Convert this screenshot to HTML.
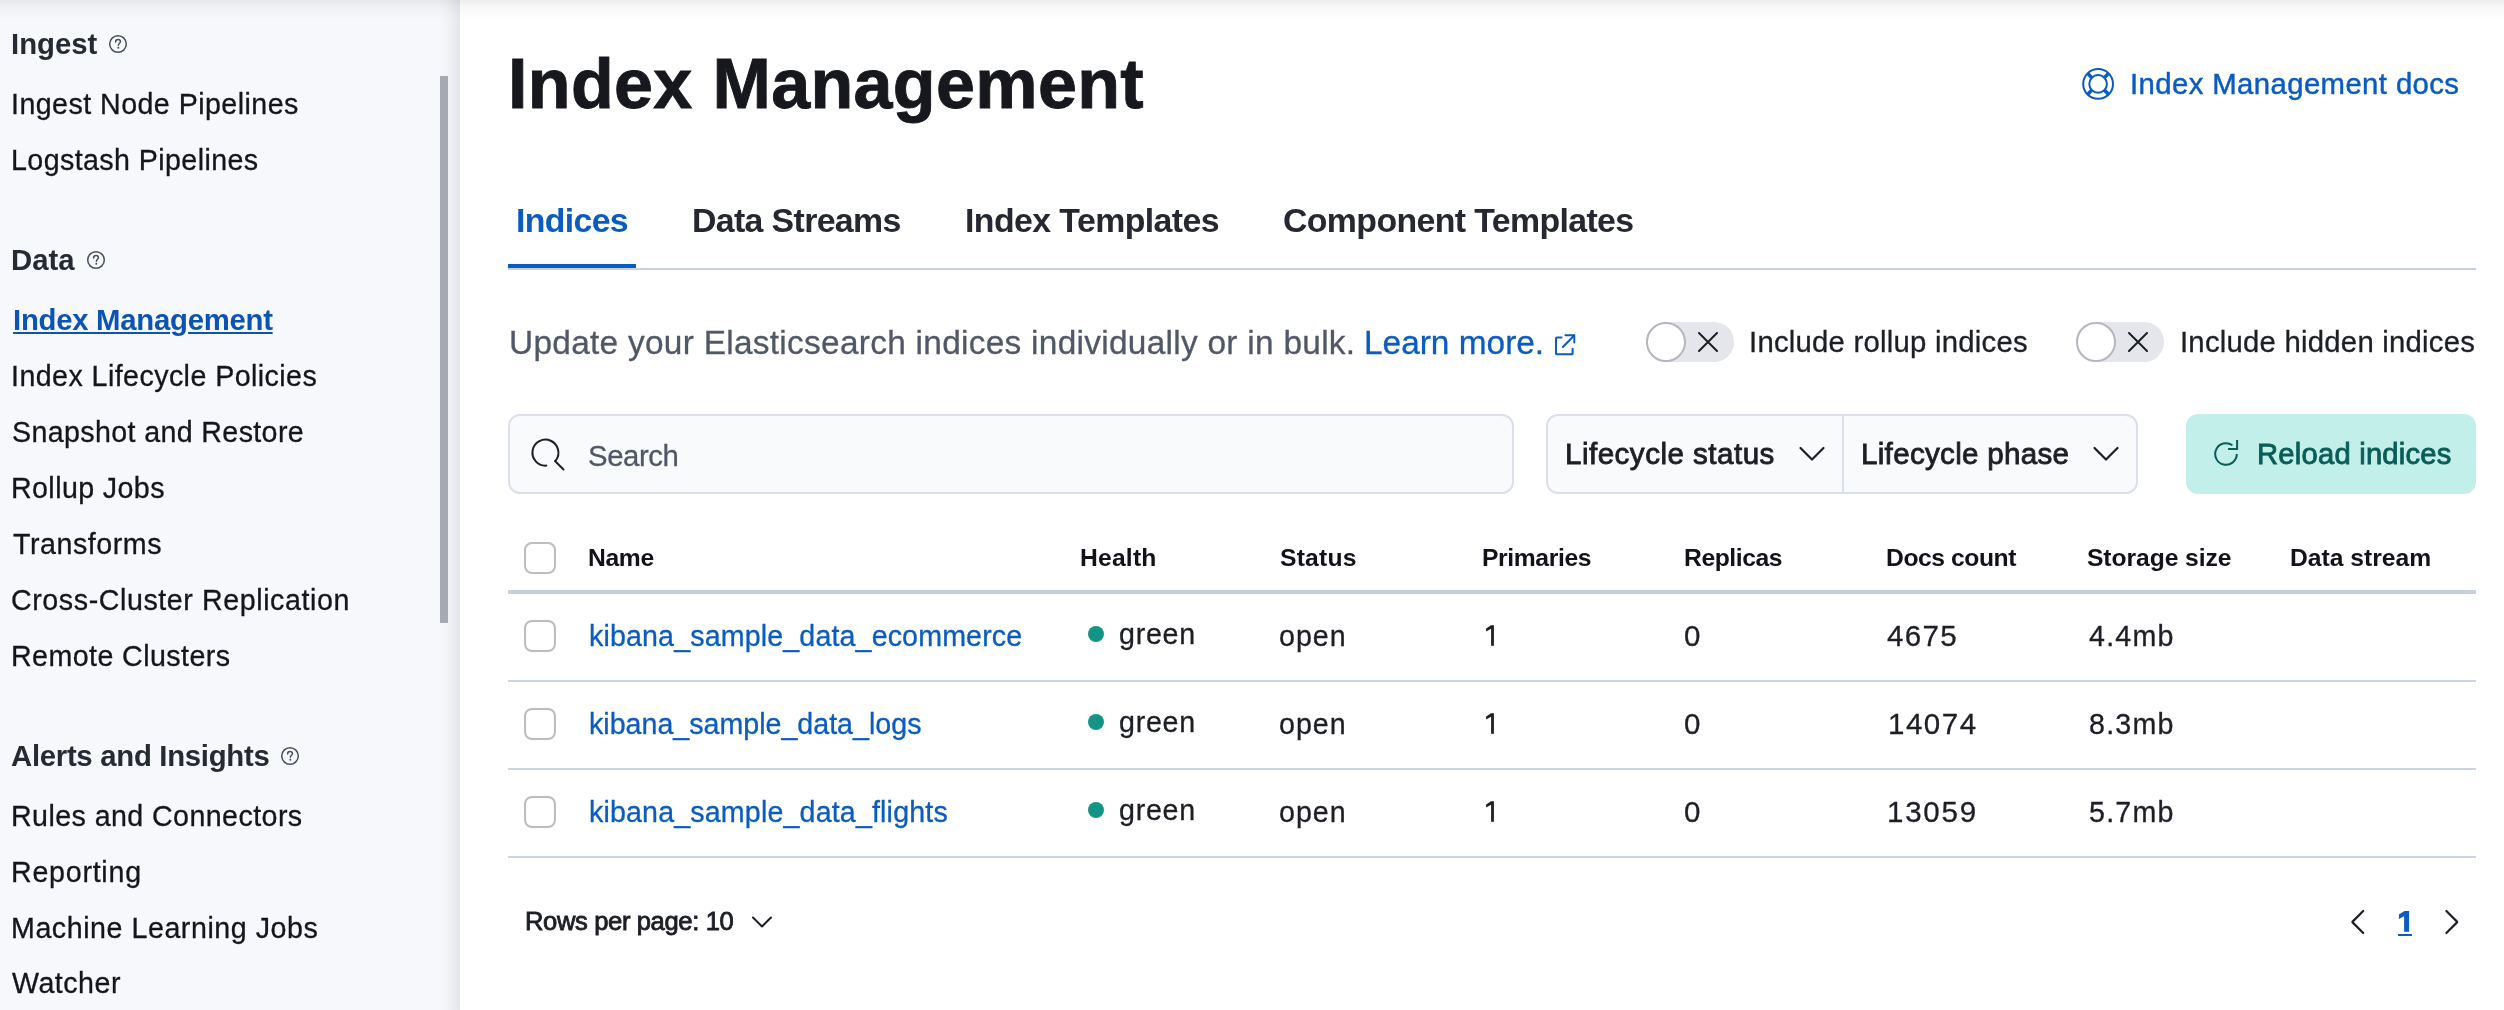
<!DOCTYPE html>
<html><head><meta charset="utf-8"><title>Index Management</title>
<style>
html,body{margin:0;padding:0;width:2504px;height:1010px;overflow:hidden;background:#fff;}
body{position:relative;font-family:"Liberation Sans",sans-serif;}
.t{position:absolute;white-space:nowrap;line-height:1;display:block;will-change:transform;}
.bm{display:inline-block;width:0;height:0;vertical-align:baseline;}
.abs{position:absolute;}
</style></head><body>
<div class="abs" style="left:0;top:0;width:460px;height:1010px;background:#F7F8FC;"></div>
<div class="abs" style="left:438px;top:0;width:22px;height:1010px;background:linear-gradient(to right,rgba(25,30,45,0) 0%,rgba(25,30,45,0.025) 45%,rgba(25,30,45,0.085) 100%);"></div>
<div class="abs" style="left:440px;top:76px;width:8px;height:547px;background:#A6A9B1;"></div>
<div class="abs" style="left:0;top:0;width:2504px;height:19px;background:linear-gradient(to bottom,rgba(40,42,50,0.085) 0%,rgba(40,42,50,0.035) 35%,rgba(40,42,50,0) 100%);"></div>
<!-- help icons -->
<svg class="abs" style="left:108px;top:34px" width="20" height="20" viewBox="0 0 20 20"><circle cx="10" cy="10" r="8.3" fill="none" stroke="#4A5060" stroke-width="1.5"/><path d="M7.6 7.9 C7.6 6.4 8.7 5.6 10 5.6 C11.3 5.6 12.4 6.4 12.4 7.7 C12.4 9.2 10.4 9.4 10.4 11.2" fill="none" stroke="#4A5060" stroke-width="1.5" stroke-linecap="round"/><circle cx="10.3" cy="13.8" r="1" fill="#4A5060"/></svg>
<svg class="abs" style="left:86px;top:250px" width="20" height="20" viewBox="0 0 20 20"><circle cx="10" cy="10" r="8.3" fill="none" stroke="#4A5060" stroke-width="1.5"/><path d="M7.6 7.9 C7.6 6.4 8.7 5.6 10 5.6 C11.3 5.6 12.4 6.4 12.4 7.7 C12.4 9.2 10.4 9.4 10.4 11.2" fill="none" stroke="#4A5060" stroke-width="1.5" stroke-linecap="round"/><circle cx="10.3" cy="13.8" r="1" fill="#4A5060"/></svg>
<svg class="abs" style="left:280px;top:746px" width="20" height="20" viewBox="0 0 20 20"><circle cx="10" cy="10" r="8.3" fill="none" stroke="#4A5060" stroke-width="1.5"/><path d="M7.6 7.9 C7.6 6.4 8.7 5.6 10 5.6 C11.3 5.6 12.4 6.4 12.4 7.7 C12.4 9.2 10.4 9.4 10.4 11.2" fill="none" stroke="#4A5060" stroke-width="1.5" stroke-linecap="round"/><circle cx="10.3" cy="13.8" r="1" fill="#4A5060"/></svg>
<!-- docs lifebuoy -->
<svg class="abs" style="left:2080px;top:66px" width="36" height="36" viewBox="0 0 36 36"><g fill="none" stroke="#0B5CC0"><circle cx="18.1" cy="17.9" r="14.9" stroke-width="2"/><circle cx="18.1" cy="17.9" r="8.8" stroke-width="2"/><path d="M11.9 11.7 L7.5 7.3 M24.3 11.7 L28.7 7.3 M11.9 24.1 L7.5 28.5 M24.3 24.1 L28.7 28.5" stroke-width="3.6"/></g></svg>
<!-- tabs -->
<div class="abs" style="left:508px;top:268px;width:1968px;height:2px;background:#CAD1DE;"></div>
<div class="abs" style="left:508px;top:264px;width:128px;height:4px;background:#0B5CC0;"></div>
<!-- external link icon -->
<svg class="abs" style="left:1552px;top:332px" width="26" height="26" viewBox="0 0 26 26"><g fill="none" stroke="#0B5CC0" stroke-width="2" stroke-linecap="round" stroke-linejoin="round"><path d="M9.6 5.4 H4.9 Q4 5.4 4 6.3 V21.4 Q4 22.3 4.9 22.3 H19.7 Q20.6 22.3 20.6 21.4 V16.8"/><path d="M13.4 3.3 H22.3 V10.4"/><path d="M22.1 3.5 L10.9 15"/></g></svg>
<!-- toggles -->
<div class="abs" style="left:1646px;top:322px;width:88px;height:40px;border-radius:20px;background:#E4E6EB;"></div>
<div class="abs" style="left:1646px;top:322px;width:36px;height:36px;border-radius:50%;background:#fff;border:2px solid #B5B7BC;"></div>
<svg class="abs" style="left:1698px;top:332px" width="20" height="20" viewBox="0 0 20 20"><path d="M1 1 L19 19 M19 1 L1 19" stroke="#1D1F25" stroke-width="2" stroke-linecap="round"/></svg>
<div class="abs" style="left:2076px;top:322px;width:88px;height:40px;border-radius:20px;background:#E4E6EB;"></div>
<div class="abs" style="left:2076px;top:322px;width:36px;height:36px;border-radius:50%;background:#fff;border:2px solid #B5B7BC;"></div>
<svg class="abs" style="left:2128px;top:332px" width="20" height="20" viewBox="0 0 20 20"><path d="M1 1 L19 19 M19 1 L1 19" stroke="#1D1F25" stroke-width="2" stroke-linecap="round"/></svg>
<!-- search -->
<div class="abs" style="left:508px;top:414px;width:1002px;height:76px;border:2px solid #DCDFEC;border-radius:12px;background:#F9FAFC;"></div>
<svg class="abs" style="left:528px;top:434px" width="40" height="40" viewBox="0 0 40 40"><g fill="none" stroke="#1D1F25" stroke-width="2" stroke-linecap="round"><path d="M18.3 31.6 A13 13 0 1 1 27.7 26.6"/><path d="M27 27 L35.5 35.5"/></g></svg>
<!-- filter group -->
<div class="abs" style="left:1546px;top:414px;width:588px;height:76px;border:2px solid #DCDFEC;border-radius:12px;background:#F9FAFC;"></div>
<div class="abs" style="left:1842px;top:414px;width:2px;height:80px;background:#DCDFEC;"></div>
<svg class="abs" style="left:1798px;top:444px" width="28" height="18" viewBox="0 0 28 18"><path d="M2.5 4 L14 15.5 L25.5 4" fill="none" stroke="#1D1F25" stroke-width="2.2" stroke-linecap="round" stroke-linejoin="round"/></svg>
<svg class="abs" style="left:2092px;top:444px" width="28" height="18" viewBox="0 0 28 18"><path d="M2.5 4 L14 15.5 L25.5 4" fill="none" stroke="#1D1F25" stroke-width="2.2" stroke-linecap="round" stroke-linejoin="round"/></svg>
<!-- reload -->
<div class="abs" style="left:2186px;top:414px;width:290px;height:80px;border-radius:12px;background:#C3EFEA;"></div>
<svg class="abs" style="left:2210px;top:438px" width="32" height="32" viewBox="0 0 32 32"><g fill="none" stroke="#0A5C57" stroke-width="2" stroke-linecap="butt"><path d="M26.8 16 A10.8 10.8 0 1 1 22.4 7.3"/><path d="M27.1 2 V11.1 H18.1"/></g></svg>
<!-- table -->
<div class="abs" style="left:508px;top:590px;width:1968px;height:4px;background:#C8D0DE;"></div>
<div class="abs" style="left:508px;top:680px;width:1968px;height:2px;background:#CDD4E1;"></div>
<div class="abs" style="left:508px;top:768px;width:1968px;height:2px;background:#CDD4E1;"></div>
<div class="abs" style="left:508px;top:856px;width:1968px;height:2px;background:#CDD4E1;"></div>
<div class="abs" style="left:524px;top:542px;width:28px;height:28px;border:2px solid #BBBDC2;border-radius:8px;background:#fff;"></div>
<div class="abs" style="left:524px;top:620px;width:28px;height:28px;border:2px solid #BBBDC2;border-radius:8px;background:#fff;"></div>
<div class="abs" style="left:524px;top:708px;width:28px;height:28px;border:2px solid #BBBDC2;border-radius:8px;background:#fff;"></div>
<div class="abs" style="left:524px;top:796px;width:28px;height:28px;border:2px solid #BBBDC2;border-radius:8px;background:#fff;"></div>
<div class="abs" style="left:1088px;top:626px;width:16px;height:16px;border-radius:50%;background:#139487;"></div>
<div class="abs" style="left:1088px;top:714px;width:16px;height:16px;border-radius:50%;background:#139487;"></div>
<div class="abs" style="left:1088px;top:802px;width:16px;height:16px;border-radius:50%;background:#139487;"></div>
<!-- footer -->
<svg class="abs" style="left:750px;top:913px" width="24" height="16" viewBox="0 0 24 16"><path d="M3 4.5 L12 13.5 L21 4.5" fill="none" stroke="#1D1F25" stroke-width="2" stroke-linecap="round" stroke-linejoin="round"/></svg>
<svg class="abs" style="left:2348px;top:908px" width="20" height="28" viewBox="0 0 20 28"><path d="M15.2 3 L4.6 13.6 Q4.2 14 4.6 14.4 L15.2 25" fill="none" stroke="#1D1F25" stroke-width="2.2" stroke-linecap="round" stroke-linejoin="round"/></svg>
<svg class="abs" style="left:2442px;top:908px" width="20" height="28" viewBox="0 0 20 28"><path d="M4.4 3 L15 13.6 Q15.4 14 15 14.4 L4.4 25" fill="none" stroke="#1D1F25" stroke-width="2.2" stroke-linecap="round" stroke-linejoin="round"/></svg>
<svg class="abs" style="left:0;top:0" width="2504" height="1010" viewBox="0 0 2504 1010"><g fill="#1D1F25"><path d="M1486.1 628.4 L1491.1 625.2 L1493.9 625.2 L1493.9 645.8 L1491.1 645.8 L1491.1 628.7 L1486.1 631.4 Z"/><path d="M1486.1 716.4 L1491.1 713.2 L1493.9 713.2 L1493.9 733.8 L1491.1 733.8 L1491.1 716.7 L1486.1 719.4 Z"/><path d="M1486.1 804.4 L1491.1 801.2 L1493.9 801.2 L1493.9 821.8 L1491.1 821.8 L1491.1 804.7 L1486.1 807.4 Z"/></g><g fill="#0B5CC0"><path d="M2398.9 914.4 L2404.5 910.9 L2409.1 910.9 L2409.1 931.8 L2404.1 931.8 L2404.1 916.3 L2398.9 918.9 Z"/><rect x="2398" y="934" width="14" height="2"/></g></svg>

<span id="s1" class="t" style="left:10.98px;top:29.21px;font-size:29.32px;letter-spacing:-0.000px;color:#262A33;font-weight:700;">Ingest<i class="bm"></i></span>
<span id="s2" class="t" style="left:11.44px;top:89.71px;font-size:28.62px;letter-spacing:0.450px;color:#14161B;font-weight:400;-webkit-text-stroke:0.3px currentColor;">Ingest Node Pipelines<i class="bm"></i></span>
<span id="s3" class="t" style="left:11.14px;top:145.60px;font-size:28.62px;letter-spacing:0.410px;color:#14161B;font-weight:400;-webkit-text-stroke:0.3px currentColor;">Logstash Pipelines<i class="bm"></i></span>
<span id="s4" class="t" style="left:10.68px;top:244.90px;font-size:29.32px;letter-spacing:-0.001px;color:#262A33;font-weight:700;">Data<i class="bm"></i></span>
<span id="s5" class="t" style="left:12.68px;top:305.00px;font-size:29.32px;letter-spacing:-0.264px;color:#0C54B4;font-weight:700;text-decoration:underline;text-decoration-thickness:2px;text-underline-offset:2px;">Index Management<i class="bm"></i></span>
<span id="s6" class="t" style="left:11.44px;top:362.00px;font-size:28.62px;letter-spacing:0.434px;color:#14161B;font-weight:400;-webkit-text-stroke:0.3px currentColor;">Index Lifecycle Policies<i class="bm"></i></span>
<span id="s7" class="t" style="left:11.54px;top:418.00px;font-size:28.62px;letter-spacing:0.369px;color:#14161B;font-weight:400;-webkit-text-stroke:0.3px currentColor;">Snapshot and Restore<i class="bm"></i></span>
<span id="s8" class="t" style="left:11.04px;top:474.00px;font-size:28.62px;letter-spacing:0.400px;color:#14161B;font-weight:400;-webkit-text-stroke:0.3px currentColor;">Rollup Jobs<i class="bm"></i></span>
<span id="s9" class="t" style="left:12.54px;top:530.00px;font-size:28.62px;letter-spacing:0.548px;color:#14161B;font-weight:400;-webkit-text-stroke:0.3px currentColor;">Transforms<i class="bm"></i></span>
<span id="s10" class="t" style="left:11.04px;top:586.00px;font-size:28.62px;letter-spacing:0.584px;color:#14161B;font-weight:400;-webkit-text-stroke:0.3px currentColor;">Cross-Cluster Replication<i class="bm"></i></span>
<span id="s11" class="t" style="left:11.04px;top:642.00px;font-size:28.62px;letter-spacing:0.428px;color:#14161B;font-weight:400;-webkit-text-stroke:0.3px currentColor;">Remote Clusters<i class="bm"></i></span>
<span id="s12" class="t" style="left:11.18px;top:740.50px;font-size:29.32px;letter-spacing:-0.284px;color:#262A33;font-weight:700;">Alerts and Insights<i class="bm"></i></span>
<span id="s13" class="t" style="left:11.04px;top:801.71px;font-size:28.62px;letter-spacing:0.424px;color:#14161B;font-weight:400;-webkit-text-stroke:0.3px currentColor;">Rules and Connectors<i class="bm"></i></span>
<span id="s14" class="t" style="left:11.04px;top:858.00px;font-size:28.62px;letter-spacing:0.750px;color:#14161B;font-weight:400;-webkit-text-stroke:0.3px currentColor;">Reporting<i class="bm"></i></span>
<span id="s15" class="t" style="left:11.04px;top:914.00px;font-size:28.62px;letter-spacing:0.550px;color:#14161B;font-weight:400;-webkit-text-stroke:0.3px currentColor;">Machine Learning Jobs<i class="bm"></i></span>
<span id="s16" class="t" style="left:12.14px;top:969.40px;font-size:28.62px;letter-spacing:0.502px;color:#14161B;font-weight:400;-webkit-text-stroke:0.3px currentColor;">Watcher<i class="bm"></i></span>
<span id="m1" class="t" style="left:508.42px;top:48.71px;font-size:70.07px;letter-spacing:0.330px;color:#17181D;font-weight:700;-webkit-text-stroke:0.9px currentColor;">Index Management<i class="bm"></i></span>
<span id="m2" class="t" style="left:2130.28px;top:68.90px;font-size:29.32px;letter-spacing:0.400px;color:#0B5CC0;font-weight:400;-webkit-text-stroke:0.45px currentColor;">Index Management docs<i class="bm"></i></span>
<span id="tab1" class="t" style="left:516.11px;top:203.90px;font-size:33.83px;letter-spacing:-0.662px;color:#0B5CC0;font-weight:700;">Indices<i class="bm"></i></span>
<span id="tab2" class="t" style="left:692.11px;top:203.90px;font-size:33.83px;letter-spacing:-0.631px;color:#252830;font-weight:700;">Data Streams<i class="bm"></i></span>
<span id="tab3" class="t" style="left:964.51px;top:203.90px;font-size:33.83px;letter-spacing:-0.568px;color:#252830;font-weight:700;">Index Templates<i class="bm"></i></span>
<span id="tab4" class="t" style="left:1283.41px;top:203.90px;font-size:33.83px;letter-spacing:-0.611px;color:#252830;font-weight:700;">Component Templates<i class="bm"></i></span>
<span id="d1" class="t" style="left:508.54px;top:325.81px;font-size:33.42px;letter-spacing:0.283px;color:#505868;font-weight:400;-webkit-text-stroke:0.3px currentColor;">Update your Elasticsearch indices individually or in bulk.<i class="bm"></i></span>
<span id="d2" class="t" style="left:1364.24px;top:325.90px;font-size:33.42px;letter-spacing:0.000px;color:#0B5CC0;font-weight:400;-webkit-text-stroke:0.3px currentColor;">Learn more.<i class="bm"></i></span>
<span id="g1" class="t" style="left:1748.88px;top:327.00px;font-size:29.32px;letter-spacing:0.232px;color:#1D1F25;font-weight:400;-webkit-text-stroke:0.3px currentColor;">Include rollup indices<i class="bm"></i></span>
<span id="g2" class="t" style="left:2179.78px;top:327.00px;font-size:29.32px;letter-spacing:0.231px;color:#1D1F25;font-weight:400;-webkit-text-stroke:0.3px currentColor;">Include hidden indices<i class="bm"></i></span>
<span id="q1" class="t" style="left:587.98px;top:440.90px;font-size:29.32px;letter-spacing:-0.400px;color:#505868;font-weight:400;-webkit-text-stroke:0.3px currentColor;">Search<i class="bm"></i></span>
<span id="f1" class="t" style="left:1565.26px;top:439.10px;font-size:29.60px;letter-spacing:0.470px;color:#1D1F25;font-weight:400;-webkit-text-stroke:0.85px currentColor;">Lifecycle status<i class="bm"></i></span>
<span id="f2" class="t" style="left:1861.36px;top:439.10px;font-size:29.60px;letter-spacing:0.292px;color:#1D1F25;font-weight:400;-webkit-text-stroke:0.85px currentColor;">Lifecycle phase<i class="bm"></i></span>
<span id="rb" class="t" style="left:2256.79px;top:440.10px;font-size:29.19px;letter-spacing:0.226px;color:#0A5C57;font-weight:400;-webkit-text-stroke:0.85px currentColor;">Reload indices<i class="bm"></i></span>
<span id="h0" class="t" style="left:588.37px;top:546.00px;font-size:24.68px;letter-spacing:-0.333px;color:#111318;font-weight:700;">Name<i class="bm"></i></span>
<span id="h1" class="t" style="left:1079.77px;top:546.00px;font-size:24.68px;letter-spacing:0.200px;color:#111318;font-weight:700;">Health<i class="bm"></i></span>
<span id="h2" class="t" style="left:1279.87px;top:546.00px;font-size:24.68px;letter-spacing:0.200px;color:#111318;font-weight:700;">Status<i class="bm"></i></span>
<span id="h3" class="t" style="left:1481.97px;top:546.00px;font-size:24.68px;letter-spacing:-0.375px;color:#111318;font-weight:700;">Primaries<i class="bm"></i></span>
<span id="h4" class="t" style="left:1683.87px;top:546.00px;font-size:24.68px;letter-spacing:-0.425px;color:#111318;font-weight:700;">Replicas<i class="bm"></i></span>
<span id="h5" class="t" style="left:1885.97px;top:546.00px;font-size:24.68px;letter-spacing:-0.439px;color:#111318;font-weight:700;">Docs count<i class="bm"></i></span>
<span id="h6" class="t" style="left:2087.47px;top:546.00px;font-size:24.68px;letter-spacing:-0.085px;color:#111318;font-weight:700;">Storage size<i class="bm"></i></span>
<span id="h7" class="t" style="left:2290.07px;top:546.00px;font-size:24.68px;letter-spacing:0.000px;color:#111318;font-weight:700;">Data stream<i class="bm"></i></span>
<span id="rn0" class="t" style="left:588.64px;top:621.81px;font-size:28.62px;letter-spacing:0.141px;color:#0B5CC0;font-weight:400;-webkit-text-stroke:0.3px currentColor;">kibana_sample_data_ecommerce<i class="bm"></i></span>
<span id="rg0" class="t" style="left:1119.44px;top:619.81px;font-size:28.62px;letter-spacing:0.750px;color:#1D1F25;font-weight:400;-webkit-text-stroke:0.3px currentColor;">green<i class="bm"></i></span>
<span id="ro0" class="t" style="left:1279.44px;top:622.00px;font-size:28.62px;letter-spacing:0.995px;color:#1D1F25;font-weight:400;-webkit-text-stroke:0.3px currentColor;">open<i class="bm"></i></span>
<span id="rr0" class="t" style="left:1684.24px;top:621.31px;font-size:29.51px;letter-spacing:0.000px;color:#1D1F25;font-weight:400;-webkit-text-stroke:0.3px currentColor;">0<i class="bm"></i></span>
<span id="rd0" class="t" style="left:1887.04px;top:621.31px;font-size:29.51px;letter-spacing:1.333px;color:#1D1F25;font-weight:400;-webkit-text-stroke:0.3px currentColor;">4675<i class="bm"></i></span>
<span id="rs0" class="t" style="left:2088.94px;top:622.00px;font-size:28.62px;letter-spacing:1.250px;color:#1D1F25;font-weight:400;-webkit-text-stroke:0.3px currentColor;">4.4mb<i class="bm"></i></span>
<span id="rn1" class="t" style="left:588.64px;top:709.81px;font-size:28.62px;letter-spacing:0.000px;color:#0B5CC0;font-weight:400;-webkit-text-stroke:0.3px currentColor;">kibana_sample_data_logs<i class="bm"></i></span>
<span id="rg1" class="t" style="left:1119.44px;top:707.81px;font-size:28.62px;letter-spacing:0.750px;color:#1D1F25;font-weight:400;-webkit-text-stroke:0.3px currentColor;">green<i class="bm"></i></span>
<span id="ro1" class="t" style="left:1279.44px;top:710.00px;font-size:28.62px;letter-spacing:0.995px;color:#1D1F25;font-weight:400;-webkit-text-stroke:0.3px currentColor;">open<i class="bm"></i></span>
<span id="rr1" class="t" style="left:1684.24px;top:709.31px;font-size:29.51px;letter-spacing:0.000px;color:#1D1F25;font-weight:400;-webkit-text-stroke:0.3px currentColor;">0<i class="bm"></i></span>
<span id="rd1" class="t" style="left:1887.64px;top:709.31px;font-size:29.51px;letter-spacing:1.500px;color:#1D1F25;font-weight:400;-webkit-text-stroke:0.3px currentColor;">14074<i class="bm"></i></span>
<span id="rs1" class="t" style="left:2088.54px;top:710.00px;font-size:28.62px;letter-spacing:1.250px;color:#1D1F25;font-weight:400;-webkit-text-stroke:0.3px currentColor;">8.3mb<i class="bm"></i></span>
<span id="rn2" class="t" style="left:588.64px;top:797.81px;font-size:28.62px;letter-spacing:0.160px;color:#0B5CC0;font-weight:400;-webkit-text-stroke:0.3px currentColor;">kibana_sample_data_flights<i class="bm"></i></span>
<span id="rg2" class="t" style="left:1119.44px;top:795.81px;font-size:28.62px;letter-spacing:0.750px;color:#1D1F25;font-weight:400;-webkit-text-stroke:0.3px currentColor;">green<i class="bm"></i></span>
<span id="ro2" class="t" style="left:1279.44px;top:798.00px;font-size:28.62px;letter-spacing:0.995px;color:#1D1F25;font-weight:400;-webkit-text-stroke:0.3px currentColor;">open<i class="bm"></i></span>
<span id="rr2" class="t" style="left:1684.24px;top:797.31px;font-size:29.51px;letter-spacing:0.000px;color:#1D1F25;font-weight:400;-webkit-text-stroke:0.3px currentColor;">0<i class="bm"></i></span>
<span id="rd2" class="t" style="left:1886.94px;top:797.31px;font-size:29.51px;letter-spacing:1.750px;color:#1D1F25;font-weight:400;-webkit-text-stroke:0.3px currentColor;">13059<i class="bm"></i></span>
<span id="rs2" class="t" style="left:2088.64px;top:798.00px;font-size:28.62px;letter-spacing:1.250px;color:#1D1F25;font-weight:400;-webkit-text-stroke:0.3px currentColor;">5.7mb<i class="bm"></i></span>
<span id="rpp" class="t" style="left:524.55px;top:908.91px;font-size:25.58px;letter-spacing:-0.375px;color:#1D1F25;font-weight:400;-webkit-text-stroke:0.85px currentColor;">Rows per page: 10<i class="bm"></i></span>
</body></html>
